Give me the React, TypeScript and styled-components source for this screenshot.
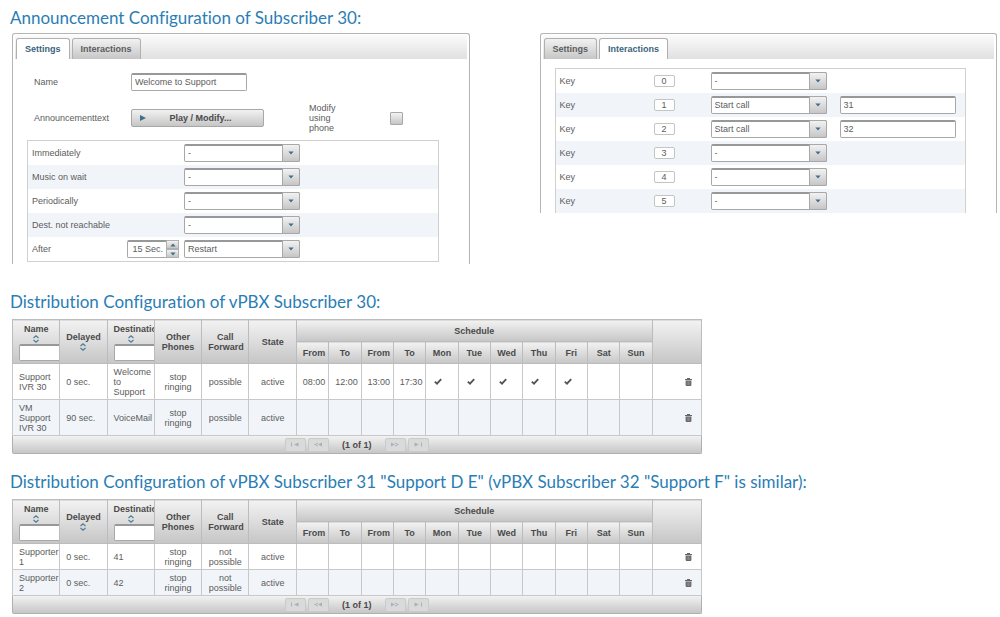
import React, { useId, useState } from "react";
import styled, { createGlobalStyle, css } from "styled-components";

const GlobalStyle = createGlobalStyle`
  *, *::before, *::after { box-sizing: border-box; }
  body {
    margin: 0;
    background: #fff;
    color: #5c5c5c;
    font: 9px/10px "Liberation Sans", Arial, sans-serif;
  }
  button, input, select { font: inherit; color: inherit; margin: 0; }
`;

const raised = css`
  background: linear-gradient(#f2f2f2, #c6c6c6);
`;

const Page = styled.main`
  padding: 8px 3px 4px 12px;
`;

const Section = styled.section`
  margin-bottom: 18px;
`;

const Title = styled.h2`
  margin: 0 0 7px -2px;
  font: 400 17px/20px "Century Gothic", Lato, sans-serif;
  font-variant-ligatures: none;
  color: #2a7db5;
`;

const Panels = styled.div`
  display: grid;
  grid-template-columns: 1fr 1fr;
  gap: 70px;
  align-items: start;
  margin: -2px 0 28px;
`;

const Panel = styled.div`
  border: 1px solid #b4b4b4;
  border-bottom: 0;
  border-radius: 3px 3px 0 0;
  padding: 1px 2px 0;
`;

const TabBar = styled.div`
  display: flex;
  align-items: flex-end;
  gap: 2px;
  height: 24px;
  padding-left: 1px;
  background: linear-gradient(#fbfbfb, #e0e0e0);
`;

const Tab = styled.button<{ $active: boolean }>`
  height: 21px;
  padding: 0 8px;
  border: 1px solid #b0b0b0;
  border-bottom: 0;
  border-radius: 3px 3px 0 0;
  font-weight: 700;
  ${(p) => (p.$active ? "background: #fff; color: #3a647c;" : raised)}
`;

const Form = styled.div`
  display: grid;
  grid-template-columns: 97px 178px 81px auto;
  align-items: center;
  row-gap: 12px;
  padding: 14px 0 7px 19px;
`;

const ModifyLabel = styled.label`
  grid-column: 3;
  width: 32px;
`;

const TextInput = styled.input`
  width: 116px;
  height: 18px;
  padding: 0 3px 2px;
  border: 1px solid #a8a8a8;
  border-top: 2px solid #989898;
  border-radius: 2px;
  background: #fff;
  outline: 0;
`;

const PlayButton = styled.button`
  display: grid;
  grid-template-columns: 6px 1fr;
  align-items: center;
  width: 133px;
  height: 18px;
  padding: 0 8px;
  border: 1px solid #a8a8a8;
  border-radius: 2px;
  font-weight: 700;
  color: #4a4a4a;
  ${raised}
`;

const CheckBox = styled.input`
  appearance: none;
  width: 13px;
  height: 13px;
  border: 1px solid #a8a8a8;
  border-radius: 1px;
  ${raised}
`;

const Box = styled.div<{ $open?: boolean }>`
  margin: 0 28px 2px 12px;
  border: 1px solid #d0d0d0;
  ${(p) => p.$open && "border-bottom: 0; margin-top: 9px; margin-bottom: 0;"}
`;

const Row = styled.div`
  display: grid;
  align-items: center;
  height: 24px;
  &:nth-child(even) { background: #f1f5fa; }
`;

const ActionRow = styled(Row)`
  grid-template-columns: 90px 52px 116px;
  column-gap: 5px;
  padding: 0 4px;
  & > :nth-child(2):last-child { grid-column: 3; }
`;

const KeyRow = styled(Row)`
  grid-template-columns: 94px 57px 129px 116px;
  padding: 0 4px;
`;

const KeyCap = styled.span`
  width: 21px;
  height: 12px;
  border: 1px solid #c4c4c4;
  border-radius: 2px;
  background: #fff;
  text-align: center;
`;

const SelectWrap = styled.span`
  position: relative;
  width: 116px;
  height: 18px;
`;

const SelectBox = styled.select`
  appearance: none;
  display: block;
  width: 100%;
  height: 18px;
  padding: 0 20px 2px 3px;
  border: 1px solid #a8a8a8;
  border-top: 2px solid #989898;
  border-radius: 2px;
  background: #fff;
  outline: 0;
`;

const SelectButton = styled.span`
  position: absolute;
  top: 0;
  right: 0;
  display: flex;
  align-items: center;
  justify-content: center;
  width: 18px;
  height: 18px;
  border: 1px solid #a8a8a8;
  border-radius: 0 2px 2px 0;
  pointer-events: none;
  ${raised}
`;

const Spinner = styled.span`
  display: grid;
  grid-template-columns: 1fr 13px;
  height: 18px;
`;

const SpinnerInput = styled(TextInput)`
  width: 100%;
  border-radius: 2px 0 0 2px;
  border-right: 0;
  text-align: right;
`;

const SpinnerButtons = styled.span`
  display: grid;
  grid-template-rows: 1fr 1fr;
`;

const StepButton = styled.button`
  display: flex;
  align-items: center;
  justify-content: center;
  padding: 0;
  border: 1px solid #b0b0b0;
  ${raised}
`;

const Grid = styled.div`
  width: 70%;
`;

const Table = styled.table`
  width: 100%;
  table-layout: fixed;
  border-collapse: collapse;
`;

const Head = styled.th`
  height: 22px;
  padding: 0 6px;
  border: 1px solid #bcbcbc;
  overflow: hidden;
  color: #4a4a4a;
  ${raised}
`;

const HeadStack = styled.div`
  display: flex;
  flex-direction: column;
  align-items: center;
`;

const FilterStack = styled(HeadStack)`
  align-items: stretch;
  justify-content: flex-end;
  height: 38px;
`;

const SortButton = styled.button`
  display: flex;
  align-items: center;
  justify-content: center;
  height: 10px;
  padding: 0;
  border: 0;
  background: none;
`;

const Filter = styled(TextInput)`
  width: 60px;
  height: 17px;
`;

const BodyRow = styled.tr<{ $tall?: boolean }>`
  height: ${(p) => (p.$tall ? 36 : 26)}px;
  &:nth-child(even) { background: #f1f5fa; }
`;

const Cell = styled.td<{ $align?: string }>`
  padding: 0 6px;
  border: 1px solid #c8c8c8;
  text-align: ${(p) => p.$align ?? "center"};
`;

const DayCell = styled(Cell)`
  padding-left: 8px;
  text-align: left;
`;

const ActionCell = styled(Cell)`
  padding-right: 9px;
  text-align: right;
`;

const IconButton = styled.button`
  padding: 0;
  border: 0;
  background: none;
  vertical-align: middle;
  svg { display: block; }
`;

const Pager = styled.nav`
  display: flex;
  align-items: center;
  justify-content: center;
  gap: 2px;
  height: 18px;
  border: 1px solid #b0b0b0;
  border-top: 0;
  border-radius: 0 0 2px 2px;
  font-weight: 700;
  color: #4a4a4a;
  ${raised}
`;

const PageButton = styled.button`
  display: flex;
  align-items: center;
  justify-content: center;
  width: 21px;
  height: 14px;
  padding: 0;
  border: 1px solid #cacaca;
  border-radius: 2px;
  background: #dadada;
`;

const PageInfo = styled.span`
  margin: 0 11px;
`;

const Triangle = ({ up }: { up?: boolean }) => (
  <svg width="6" height="4" viewBox="0 0 6 4" aria-hidden="true">
    <path d={up ? "M.4 3.6 3 .4l2.6 3.2z" : "M.4.4h5.2L3 3.6z"} fill="#3f6f8a" />
  </svg>
);

const SortIcon = () => (
  <svg width="6" height="8" viewBox="0 0 6 8" fill="none" stroke="#4f7f99" strokeWidth="1.2" aria-hidden="true">
    <path d="M.5 3 3 .8 5.5 3M.5 5 3 7.2 5.5 5" />
  </svg>
);

const CheckIcon = () => (
  <svg width="8" height="7" viewBox="0 0 8 7" role="img" aria-label="yes">
    <path d="M.8 3.6 3 5.6 7.2 1.2" fill="none" stroke="#555" strokeWidth="1.9" />
  </svg>
);

const TrashIcon = () => (
  <svg width="7" height="8" viewBox="0 0 7 8" aria-hidden="true">
    <path d="M0 1h2V0h3v1h2v1H0zM.6 2.5h5.8V7.2L5.6 8H1.4L.6 7.2z" fill="#666" />
    <path d="M2.2 3.3v3.8M3.5 3.3v3.8M4.8 3.3v3.8" stroke="#aaa" strokeWidth=".5" />
  </svg>
);

const pagerPaths = {
  First: "M0 .5h1v4H0zM7.5.5v4L3 2.5z",
  Previous: "M8 .5v4L4 2.5zM4 .5v1L1.8 2.5 4 3.5v1L0 2.5z",
  Next: "M0 .5v4l4-2zM4 .5v1l2.2 1L4 3.5v1l4-2z",
  Last: "M.5.5v4L5 2.5zM7 .5h1v4H7z",
};

const PagerButton = ({ kind }: { kind: keyof typeof pagerPaths }) => (
  <PageButton type="button" disabled aria-label={`${kind} page`}>
    <svg width="8" height="5" viewBox="0 0 8 5" aria-hidden="true">
      <path d={pagerPaths[kind]} fill="#a3b3bc" />
    </svg>
  </PageButton>
);

const Select = ({ id, label, value }: { id?: string; label?: string; value: string }) => (
  <SelectWrap>
    <SelectBox id={id} aria-label={label} defaultValue={value}>
      <option>{value}</option>
    </SelectBox>
    <SelectButton><Triangle /></SelectButton>
  </SelectWrap>
);

const Tabs = ({ active }: { active: string }) => (
  <TabBar role="tablist">
    {["Settings", "Interactions"].map((name) => (
      <Tab key={name} type="button" role="tab" aria-selected={name === active} $active={name === active}>
        {name}
      </Tab>
    ))}
  </TabBar>
);

const actions = ["Immediately", "Music on wait", "Periodically", "Dest. not reachable", "After"];

const SettingsPanel = () => {
  const id = useId();
  const [delay, setDelay] = useState(15);
  return (
    <Panel>
      <Tabs active="Settings" />
      <Form>
        <label htmlFor={`${id}name`}>Name</label>
        <TextInput id={`${id}name`} defaultValue="Welcome to Support" />
        <span />
        <span />
        <label htmlFor={`${id}play`}>Announcementtext</label>
        <PlayButton id={`${id}play`} type="button">
          <svg width="6" height="6" viewBox="0 0 6 6" aria-hidden="true">
            <path d="M0 0v6l6-3z" fill="#3f6f8a" />
          </svg>
          <span>Play / Modify...</span>
        </PlayButton>
        <ModifyLabel htmlFor={`${id}phone`}>Modify using phone</ModifyLabel>
        <CheckBox id={`${id}phone`} type="checkbox" />
      </Form>
      <Box>
        {actions.map((name) => (
          <ActionRow key={name}>
            <label htmlFor={id + name}>{name}</label>
            {name === "After" && (
              <Spinner>
                <SpinnerInput aria-label="Delay" value={`${delay} Sec.`} readOnly />
                <SpinnerButtons>
                  <StepButton type="button" aria-label="Increase" onClick={() => setDelay(delay + 1)}><Triangle up /></StepButton>
                  <StepButton type="button" aria-label="Decrease" onClick={() => setDelay(Math.max(0, delay - 1))}><Triangle /></StepButton>
                </SpinnerButtons>
              </Spinner>
            )}
            <Select id={id + name} value={name === "After" ? "Restart" : "-"} />
          </ActionRow>
        ))}
      </Box>
    </Panel>
  );
};

const keyTargets = ["", "31", "32", "", "", ""];

const InteractionsPanel = () => (
  <Panel>
    <Tabs active="Interactions" />
    <Box $open>
      {keyTargets.map((target, key) => (
        <KeyRow key={key}>
          <span>Key</span>
          <KeyCap>{key}</KeyCap>
          <Select label={`Action for key ${key}`} value={target ? "Start call" : "-"} />
          {target && <TextInput aria-label={`Target for key ${key}`} defaultValue={target} />}
        </KeyRow>
      ))}
    </Box>
  </Panel>
);

type Entry = {
  name: string;
  delay: string;
  destination: string;
  forward: string;
  times?: string[];
};

const dayNames = ["Mon", "Tue", "Wed", "Thu", "Fri", "Sat", "Sun"];
const timeNames = ["From", "To", "From", "To"];

const Sort = ({ name }: { name: string }) => (
  <SortButton type="button" aria-label={`Sort by ${name}`}><SortIcon /></SortButton>
);

const FilterHead = ({ name }: { name: string }) => (
  <Head rowSpan={2}>
    <FilterStack>
      <span>{name}</span>
      <Sort name={name} />
      <Filter aria-label={`Filter by ${name}`} />
    </FilterStack>
  </Head>
);

const DistributionTable = ({ entries, tall }: { entries: Entry[]; tall?: boolean }) => (
  <Grid>
    <Table>
      <colgroup>
        {Array.from({ length: 6 }, (_, i) => <col key={i} width={38} />)}
        {Array.from({ length: 11 }, (_, i) => <col key={i} width={26} />)}
        <col width={39} />
      </colgroup>
      <thead>
        <tr>
          <FilterHead name="Name" />
          <Head rowSpan={2}>
            <HeadStack><span>Delayed</span><Sort name="Delayed" /></HeadStack>
          </Head>
          <FilterHead name="Destination" />
          <Head rowSpan={2}>Other Phones</Head>
          <Head rowSpan={2}>Call Forward</Head>
          <Head rowSpan={2}>State</Head>
          <Head colSpan={11}>Schedule</Head>
          <Head rowSpan={2} />
        </tr>
        <tr>
          {[...timeNames, ...dayNames].map((name, i) => <Head key={i}>{name}</Head>)}
        </tr>
      </thead>
      <tbody>
        {entries.map((entry) => (
          <BodyRow key={entry.name} $tall={tall}>
            <Cell $align="left">{entry.name}</Cell>
            <Cell $align="left">{entry.delay}</Cell>
            <Cell $align="left">{entry.destination}</Cell>
            <Cell>stop ringing</Cell>
            <Cell>{entry.forward}</Cell>
            <Cell>active</Cell>
            {timeNames.map((_, i) => <Cell key={i}>{entry.times?.[i]}</Cell>)}
            {dayNames.map((day, i) => (
              <DayCell key={day}>{entry.times && i < 5 && <CheckIcon />}</DayCell>
            ))}
            <ActionCell>
              <IconButton type="button" aria-label={`Delete ${entry.name}`}><TrashIcon /></IconButton>
            </ActionCell>
          </BodyRow>
        ))}
      </tbody>
    </Table>
    <Pager aria-label="Pages">
      <PagerButton kind="First" />
      <PagerButton kind="Previous" />
      <PageInfo>(1 of 1)</PageInfo>
      <PagerButton kind="Next" />
      <PagerButton kind="Last" />
    </Pager>
  </Grid>
);

const ivrEntries: Entry[] = [
  { name: "Support IVR 30", delay: "0 sec.", destination: "Welcome to Support", forward: "possible", times: ["08:00", "12:00", "13:00", "17:30"] },
  { name: "VM Support IVR 30", delay: "90 sec.", destination: "VoiceMail", forward: "possible" },
];

const supporterEntries: Entry[] = [
  { name: "Supporter 1", delay: "0 sec.", destination: "41", forward: "not possible" },
  { name: "Supporter 2", delay: "0 sec.", destination: "42", forward: "not possible" },
];

export default function App() {
  return (
    <>
      <GlobalStyle />
      <Page>
        <Title>Announcement Configuration of Subscriber 30:</Title>
        <Panels>
          <SettingsPanel />
          <InteractionsPanel />
        </Panels>
        <Section>
          <Title>Distribution Configuration of vPBX Subscriber 30:</Title>
          <DistributionTable entries={ivrEntries} tall />
        </Section>
        <Title>Distribution Configuration of vPBX Subscriber 31 "Support D E" (vPBX Subscriber 32 "Support F" is similar):</Title>
        <DistributionTable entries={supporterEntries} />
      </Page>
    </>
  );
}
